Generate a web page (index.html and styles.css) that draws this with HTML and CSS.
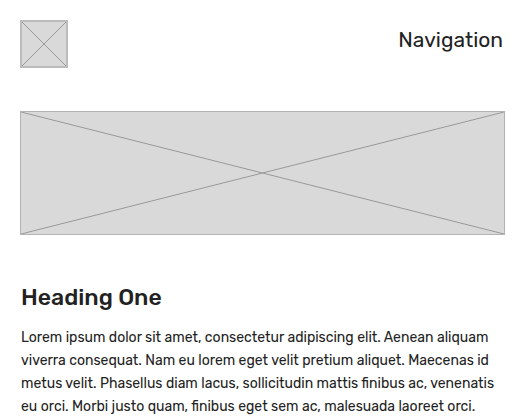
FILE: index.html
```html
<!DOCTYPE html>
<html>
<head>
<meta charset="utf-8">
<link rel="stylesheet" href="styles.css">
</head>
<body>
<div class="page">
  <header class="header">
    <div class="ph logo">
      <svg viewBox="0 0 44 44" preserveAspectRatio="none"><line x1="0" y1="0" x2="44" y2="44"/><line x1="44" y1="0" x2="0" y2="44"/></svg>
    </div>
    <nav class="nav">Navigation</nav>
  </header>
  <div class="ph banner">
    <svg viewBox="0 0 483 122" preserveAspectRatio="none"><line x1="0" y1="0" x2="483" y2="122"/><line x1="483" y1="0" x2="0" y2="122"/></svg>
  </div>
  <h1 class="heading">Heading One</h1>
  <p class="text">Lorem ipsum dolor sit amet, consectetur adipiscing elit. Aenean aliquam viverra consequat. Nam eu lorem eget velit pretium aliquet. Maecenas id metus velit. Phasellus diam lacus, sollicitudin mattis finibus ac, venenatis eu orci. Morbi justo quam, finibus eget sem ac, malesuada laoreet orci.</p>
</div>
</body>
</html>
```
FILE: styles.css
```css
html, body { margin: 0; padding: 0; background: #fff; }
body { font-family: Rubik, Inter, "Noto Sans", sans-serif; color: #222; }
.page { padding: 20px; }
.header { display: flex; justify-content: space-between; align-items: flex-start; }
.ph { background: #d9d9d9; border: 1px solid #b3b3b3; box-sizing: border-box; }
.ph svg { display: block; width: 100%; height: 100%; }
.ph line { stroke: #999; stroke-width: 1; }
.logo { width: 48px; height: 48px; border-width: 2px; border-color: #bbb; }
.nav { font-size: 21px; line-height: 24px; margin-top: 8px; margin-right: 2px; color: #222; }
.banner { margin-top: 43px; height: 124px; }
.heading { font-size: 23px; font-weight: 500; margin: 48px 0 0 1px; line-height: 28px; color: #222; }
.text { font-size: 14px; line-height: 23px; margin: 15px 0 0 1px; color: #222; }
```
